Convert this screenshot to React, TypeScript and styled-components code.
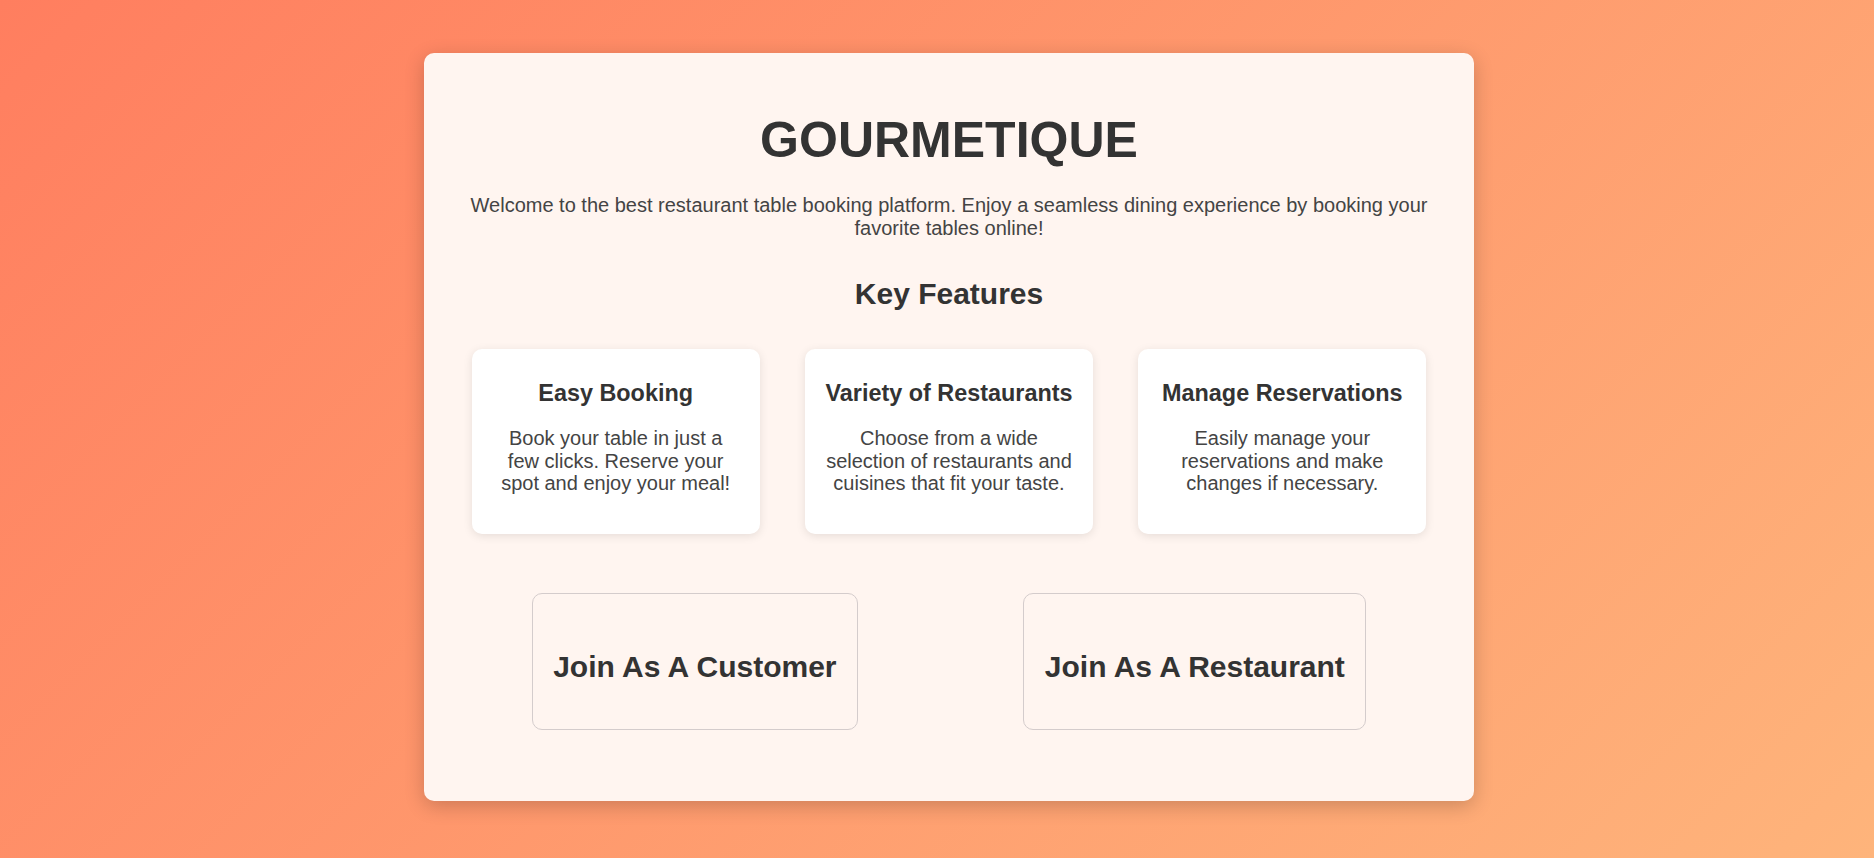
import React from "react";
import styled, { createGlobalStyle } from "styled-components";

const GlobalStyle = createGlobalStyle`
  html, body {
    margin: 0;
    padding: 0;
  }
  body {
    font-family: "Liberation Sans", Arial, Helvetica, sans-serif;
    background: linear-gradient(135deg, #ff7e5f, #feb47b);
    min-height: 100vh;
  }
  * { box-sizing: border-box; }
`;

const Page = styled.div`
  min-height: 100vh;
  display: flex;
  justify-content: center;
  align-items: flex-start;
  padding: 53px 0 0 24px;
`;

const Panel = styled.main`
  width: 1050px;
  background: #fff5f0;
  border-radius: 10px;
  box-shadow: 0 5px 20px rgba(0, 0, 0, 0.2);
  padding: 25px;
  text-align: center;
  color: #333;
`;

const Title = styled.h1`
  font-size: 50px;
  line-height: 58px;
  font-weight: 700;
  margin: 33px 0 25px;
  color: #333;
`;

const Intro = styled.p`
  font-size: 20px;
  line-height: 23px;
  margin: 0;
  color: #444;
`;

const SectionTitle = styled.h2`
  font-size: 30px;
  line-height: 34px;
  font-weight: 700;
  margin: 37px 0 38px;
  color: #333;
`;

const FeatureRow = styled.section`
  display: flex;
  justify-content: space-around;
`;

const Feature = styled.div`
  width: 288px;
  height: 185px;
  background: #ffffff;
  border-radius: 10px;
  box-shadow: 0 2px 10px rgba(0, 0, 0, 0.1);
  padding: 31px 20px 0;
`;

const FeatureTitle = styled.h3`
  font-size: 23.4px;
  line-height: 27px;
  font-weight: 700;
  margin: 0 0 20px;
  color: #333;
`;

const FeatureText = styled.p`
  font-size: 20px;
  line-height: 22.5px;
  margin: 0;
  color: #444;
`;

const JoinRow = styled.section`
  display: flex;
  justify-content: space-around;
  margin: 59px 0 46px;
`;

const JoinButton = styled.button`
  font-family: inherit;
  background: transparent;
  border: 1px solid #d4cccc;
  border-radius: 10px;
  padding: 56px 20.5px 45px;
  cursor: pointer;
  color: #333;
  font-size: 30px;
  line-height: 34px;
  font-weight: 700;
`;

const features = [
  {
    title: "Easy Booking",
    text: "Book your table in just a few clicks. Reserve your spot and enjoy your meal!",
  },
  {
    title: "Variety of Restaurants",
    text: "Choose from a wide selection of restaurants and cuisines that fit your taste.",
  },
  {
    title: "Manage Reservations",
    text: "Easily manage your reservations and make changes if necessary.",
  },
];

export default function App() {
  return (
    <>
      <GlobalStyle />
      <Page>
        <Panel>
          <Title>GOURMETIQUE</Title>
          <Intro>
            Welcome to the best restaurant table booking platform. Enjoy a seamless dining
            experience by booking your favorite tables online!
          </Intro>
          <SectionTitle>Key Features</SectionTitle>
          <FeatureRow>
            {features.map((f) => (
              <Feature key={f.title}>
                <FeatureTitle>{f.title}</FeatureTitle>
                <FeatureText>{f.text}</FeatureText>
              </Feature>
            ))}
          </FeatureRow>
          <JoinRow>
            <JoinButton>Join As A Customer</JoinButton>
            <JoinButton>Join As A Restaurant</JoinButton>
          </JoinRow>
        </Panel>
      </Page>
    </>
  );
}
